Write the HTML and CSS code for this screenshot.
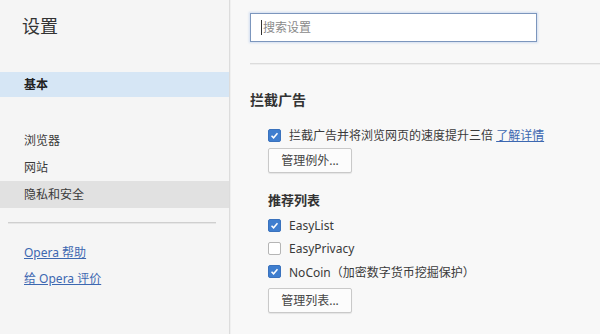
FILE: index.html
```html
<!DOCTYPE html>
<html lang="zh-CN">
<head>
    <meta charset="UTF-8">
    <title>设置</title>
    <link rel="stylesheet" href="styles.css">
</head>
<body>
    <div class="sidebar">
        <div class="side-title">设置</div>
        <div class="nav-item active">基本</div>
        <div class="nav-group">
            <div class="nav-item">浏览器</div>
            <div class="nav-item">网站</div>
            <div class="nav-item hover">隐私和安全</div>
        </div>
        <div class="side-sep"></div>
        <div class="side-links">
            <a class="side-link">Opera 帮助</a>
            <a class="side-link">给 Opera 评价</a>
        </div>
    </div>

    <div class="main">
        <div class="search"><span class="caret"></span>搜索设置</div>
        <div class="main-sep"></div>

        <div class="section-title">拦截广告</div>
        <div class="section">
            <div class="check-row">
                <span class="box on"><svg viewBox="0 0 13 13"><path d="M3 6.8 L5.4 9.2 L10 3.8" /></svg></span>
                <span>拦截广告并将浏览网页的速度提升三倍 <a class="link">了解详情</a></span>
            </div>
            <div class="btn btn-first">管理例外...</div>

            <div class="sub-title">推荐列表</div>
            <div class="list">
                <div class="check-row">
                    <span class="box on"><svg viewBox="0 0 13 13"><path d="M3 6.8 L5.4 9.2 L10 3.8" /></svg></span>
                    <span>EasyList</span>
                </div>
                <div class="check-row">
                    <span class="box"></span>
                    <span>EasyPrivacy</span>
                </div>
                <div class="check-row">
                    <span class="box on"><svg viewBox="0 0 13 13"><path d="M3 6.8 L5.4 9.2 L10 3.8" /></svg></span>
                    <span>NoCoin（加密数字货币挖掘保护）</span>
                </div>
            </div>
            <div class="btn btn-last">管理列表...</div>
        </div>
    </div>
</body>
</html>
```

FILE: styles.css
```css
body {
    margin: 0;
    height: 334px;
    display: flex;
    overflow: hidden;
    font-family: "Noto Sans", "Noto Sans CJK SC", sans-serif;
    font-size: 12px;
    color: #3a3a3a;
    background: #f8f8f8;
}

/* 左侧菜单 */
.sidebar {
    width: 229px;
    flex-shrink: 0;
    background: #f5f5f5;
    border-right: 1px solid #dcdcdc;
    box-shadow: 1px 0 0 #f0f0f0;
}
.side-title {
    font-size: 18px;
    line-height: 24px;
    padding: 14px 0 0 22px;
    height: 58px;
    color: #333;
}
.nav-item {
    height: 26px;
    line-height: 26px;
    padding-left: 24px;
}
.nav-item.active {
    background: #d6e6f5;
    height: 25px;
    line-height: 25px;
    color: #222;
    font-weight: bold;
}
.nav-group {
    margin-top: 30px;
}
.nav-group .nav-item {
    height: 27px;
    line-height: 27px;
}
.nav-item.hover {
    background: #e1e1e1;
}
.side-sep {
    margin: 14px 13px 0 8px;
    height: 1px;
    background: #cfcfcf;
    box-shadow: 0 1px 0 #e6e6e6;
}
.side-links {
    padding: 17px 0 0 24px;
    display: flex;
    flex-direction: column;
}
.side-link {
    line-height: 26px;
    color: #3d68b1;
    text-decoration: underline;
    align-self: flex-start;
}

/* 右侧内容 */
.main {
    flex: 1;
    padding-left: 20px;
}
.search {
    margin-top: 13px;
    width: 287px;
    height: 29px;
    box-sizing: border-box;
    border: 1px solid #7c96bd;
    box-shadow: 0 0 2px 1px rgba(140, 175, 225, 0.35);
    background: #fff;
    line-height: 27px;
    padding-left: 10px;
    color: #8a8a8a;
    display: flex;
    align-items: center;
}
.caret {
    width: 1px;
    height: 15px;
    background: #333;
    margin-right: 1px;
}
.main-sep {
    margin-top: 21px;
    height: 1px;
    background: #dcdcdc;
    box-shadow: 0 1px 0 #eeeeee;
}
.section-title {
    margin-top: 26px;
    font-size: 14px;
    line-height: 20px;
    font-weight: bold;
    color: #333;
}
.section {
    padding-left: 18px;
}
.check-row {
    height: 20px;
    display: flex;
    align-items: center;
    gap: 8px;
}
.section > .check-row {
    margin-top: 15px;
}
.box {
    width: 13px;
    height: 13px;
    box-sizing: border-box;
    border: 1px solid #b5b5b5;
    border-radius: 2px;
    background: #fff;
    flex-shrink: 0;
}
.box.on {
    background: #3f7ecf;
    border-color: #3a72bd;
}
.box svg {
    display: block;
    width: 11px;
    height: 11px;
}
.box path {
    fill: none;
    stroke: #fff;
    stroke-width: 1.8;
}
.link {
    color: #3d68b1;
    text-decoration: underline;
}
.btn {
    width: 84px;
    height: 25px;
    box-sizing: border-box;
    border: 1px solid #c9c9c9;
    border-radius: 2px;
    background: #fcfcfc;
    box-shadow: 0 1px 1px rgba(0, 0, 0, 0.08);
    line-height: 23px;
    text-align: center;
    color: #444;
}
.btn-first {
    margin-top: 3px;
}
.sub-title {
    margin-top: 17px;
    font-size: 13px;
    line-height: 20px;
    font-weight: bold;
    color: #333;
}
.list {
    margin-top: 4px;
}
.list .check-row {
    height: 23px;
}
.btn-last {
    margin-top: 5px;
}
```
